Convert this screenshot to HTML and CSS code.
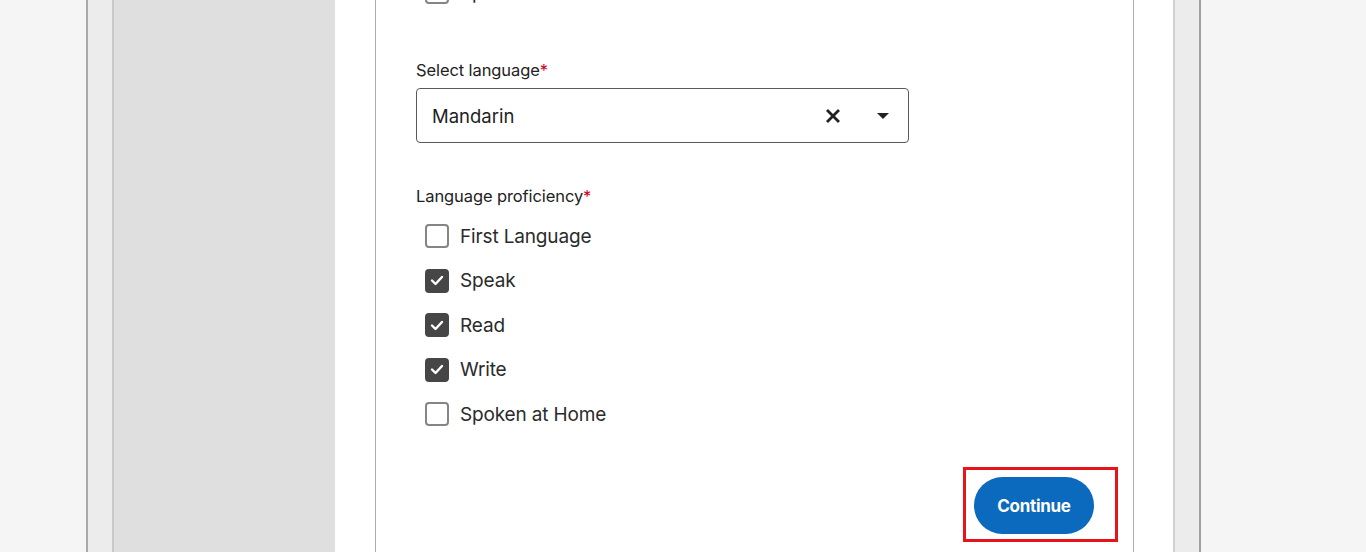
FILE: index.html
```html
<!DOCTYPE html>
<html lang="en">
<head>
<meta charset="utf-8">
<title>Language form</title>
<link rel="stylesheet" href="styles.css">
</head>
<body>
<div class="page">
  <div class="frame">
    <div class="panel">
      <aside class="sidebar"></aside>
      <main class="content">
        <section class="card">
          <div class="form">
            <label class="cb-row">
              <span class="box"></span>
              <span class="cb-text">Spoken at Home</span>
            </label>

            <div class="field">
              <div class="label">Select language<span class="req">*</span></div>
              <div class="select">
                <span class="select-value">Mandarin</span>
                <span class="select-icons">
                  <svg class="clear" width="16" height="16" viewBox="0 0 16 16" aria-hidden="true">
                    <path d="M2 2 L14 14 M14 2 L2 14" stroke="#222" stroke-width="2.8" stroke-linecap="butt" fill="none"/>
                  </svg>
                  <svg class="caret" width="12" height="6" viewBox="0 0 12 6" aria-hidden="true">
                    <path d="M0 0 H12 L6 6 Z" fill="#222"/>
                  </svg>
                </span>
              </div>
            </div>

            <div class="field field-prof">
              <div class="label">Language proficiency<span class="req">*</span></div>
              <div class="checks">
                <label class="cb-row">
                  <span class="box"></span>
                  <span class="cb-text">First Language</span>
                </label>
                <label class="cb-row">
                  <span class="box checked"><svg width="14" height="11" viewBox="0 0 14 11"><path d="M2 5.5 L5.5 9 L12 2" stroke="#fff" stroke-width="2.4" fill="none" stroke-linecap="round" stroke-linejoin="round"/></svg></span>
                  <span class="cb-text">Speak</span>
                </label>
                <label class="cb-row">
                  <span class="box checked"><svg width="14" height="11" viewBox="0 0 14 11"><path d="M2 5.5 L5.5 9 L12 2" stroke="#fff" stroke-width="2.4" fill="none" stroke-linecap="round" stroke-linejoin="round"/></svg></span>
                  <span class="cb-text">Read</span>
                </label>
                <label class="cb-row">
                  <span class="box checked"><svg width="14" height="11" viewBox="0 0 14 11"><path d="M2 5.5 L5.5 9 L12 2" stroke="#fff" stroke-width="2.4" fill="none" stroke-linecap="round" stroke-linejoin="round"/></svg></span>
                  <span class="cb-text">Write</span>
                </label>
                <label class="cb-row">
                  <span class="box"></span>
                  <span class="cb-text">Spoken at Home</span>
                </label>
              </div>
            </div>

            <div class="actions">
              <div class="highlight">
                <button class="btn-continue" type="button">Continue</button>
              </div>
            </div>
          </div>
        </section>
      </main>
    </div>
  </div>
  <div class="bottom-strip"></div>
</div>
</body>
</html>
```

FILE: styles.css
```css
html, body {
  margin: 0;
  padding: 0;
}

body {
  background: #ffffff;
  font-family: Inter, "Noto Sans", "Liberation Sans", sans-serif;
  color: #222;
  overflow: hidden;
}

.page {
  width: 1366px;
  height: 557px;
  display: flex;
  flex-direction: column;
}

.frame {
  height: 552px;
  background: #f5f5f5;
  padding-left: 86px;
  padding-right: 165px;
  display: flex;
  overflow: hidden;
}

.bottom-strip {
  height: 5px;
  background: #ffffff;
}

.panel {
  flex: 1;
  background: #ececec;
  border-left: 2px solid #a9a9a9;
  border-right: 2px solid #a0a0a0;
  padding-left: 24px;
  padding-right: 24px;
  display: flex;
}

.panel > .sidebar,
.panel > .content {
  height: 100%;
}

.sidebar {
  width: 221px;
  background: #dfdfdf;
  border-left: 2px solid #c9c9c9;
  flex-shrink: 0;
}

.content {
  flex: 1;
  background: #ffffff;
  padding-left: 40px;
  padding-right: 39px;
  border-right: 2px solid #d0d0d0;
  display: flex;
}

.card {
  flex: 1;
  background: #ffffff;
  border-left: 1px solid #acacac;
  border-right: 1px solid #acacac;
  padding-left: 40px;
  padding-right: 15px;
  overflow: hidden;
}

.form {
  margin-top: -30px;
}

.cb-row {
  height: 44.5px;
  display: flex;
  align-items: center;
  padding-left: 9px;
  cursor: pointer;
}

.box {
  width: 24px;
  height: 24px;
  box-sizing: border-box;
  border: 2px solid #858585;
  border-radius: 4px;
  background: #fff;
  display: flex;
  align-items: center;
  justify-content: center;
  flex-shrink: 0;
}

.box.checked {
  background: #464646;
  border-color: #464646;
}

.cb-text {
  margin-left: 11px;
  font-size: 19px;
  color: #2b2b2b;
  letter-spacing: -0.15px;
}

.field {
  margin-top: 46px;
}

.label {
  font-size: 16.5px;
  line-height: 18px;
  color: #222;
  letter-spacing: -0.1px;
}

.req {
  color: #d0021b;
}

.select {
  margin-top: 9.5px;
  width: 493px;
  height: 55px;
  box-sizing: border-box;
  border: 1px solid #5a5a5a;
  border-radius: 4px;
  display: flex;
  align-items: center;
  padding-left: 15px;
  padding-right: 19px;
}

.select-value {
  flex: 1;
  font-size: 18.5px;
  color: #222;
}

.select-icons {
  display: flex;
  align-items: center;
}

.clear {
  margin-right: 36px;
}

.field-prof {
  margin-top: 44px;
}

.checks {
  margin-top: 9px;
}

.actions {
  display: flex;
  justify-content: flex-end;
  margin-top: 30.5px;
}

.highlight {
  border: 3px solid #e8141c;
  padding: 7px 21px 5px 8px;
}

.btn-continue {
  display: block;
  width: 120px;
  height: 57px;
  border: none;
  border-radius: 29px;
  background: #0b69be;
  color: #ffffff;
  font-family: Inter, "Noto Sans", sans-serif;
  font-weight: 700;
  font-size: 17px;
  letter-spacing: -0.3px;
  cursor: pointer;
}
```
